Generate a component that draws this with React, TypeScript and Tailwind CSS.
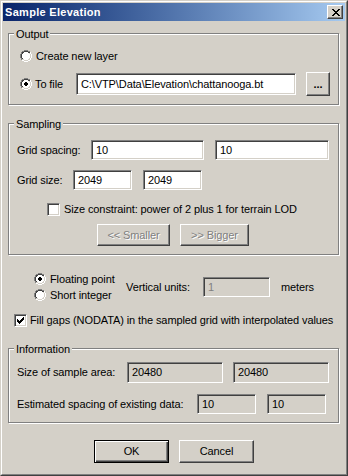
import React from "react";

// classic win2k palette
const PAL: Record<string, string> = {
  g: "#808080",
  k: "#404040",
  w: "#ffffff",
  l: "#d4d0c8",
  f: "#ffffff",
  d: "#000000",
};

const RADIO_OFF = [
  "....gggg....",
  "..ggkkkkgg..",
  ".gkkffffkkw.",
  ".gkfffffflw.",
  "gkfffffffflw",
  "gkfffffffflw",
  "gkfffffffflw",
  "gkfffffffflw",
  ".gkfffffflw.",
  ".gllffffllw.",
  "..wwllllww..",
  "....wwww....",
];

const RADIO_ON = [
  "....gggg....",
  "..ggkkkkgg..",
  ".gkkffffkkw.",
  ".gkfffffflw.",
  "gkfffddffflw",
  "gkffddddfflw",
  "gkffddddfflw",
  "gkfffddffflw",
  ".gkfffffflw.",
  ".gllffffllw.",
  "..wwllllww..",
  "....wwww....",
];

const CHECK = [
  "......d",
  ".....dd",
  "d...ddd",
  "dd.ddd.",
  "ddddd..",
  ".ddd...",
  "..d....",
];

const XMARK = [
  "dd....dd",
  ".dd..dd.",
  "..dddd..",
  "...dd...",
  "..dddd..",
  ".dd..dd.",
  "dd....dd",
];

function Pix({ rows, className }: { rows: string[]; className?: string }) {
  return (
    <svg
      width={rows[0].length}
      height={rows.length}
      shapeRendering="crispEdges"
      className={className}
    >
      {rows.flatMap((r, y) =>
        [...r].map((c, x) =>
          c === "." ? null : (
            <rect key={`${x}-${y}`} x={x} y={y} width={1} height={1} fill={PAL[c]} />
          )
        )
      )}
    </svg>
  );
}

function Radio({ checked, label }: { checked?: boolean; label: string }) {
  return (
    <div className="flex items-center h-[16px] gap-[4px]">
      <Pix rows={checked ? RADIO_ON : RADIO_OFF} className="shrink-0" />
      <span className="whitespace-nowrap">{label}</span>
    </div>
  );
}

function CheckBox({ checked }: { checked?: boolean }) {
  return (
    <div className="w-[13px] h-[13px] shrink-0 bg-white border border-t-[#808080] border-l-[#808080] border-b-white border-r-white shadow-[inset_1px_1px_0_#404040,inset_-1px_-1px_0_#d4d0c8] flex items-center justify-center">
      {checked && <Pix rows={CHECK} />}
    </div>
  );
}

function Field({
  className,
  value,
  disabled,
  readOnly,
}: {
  className: string;
  value: string;
  disabled?: boolean;
  readOnly?: boolean;
}) {
  const bg = disabled || readOnly ? "bg-[#d4d0c8]" : "bg-white";
  const color = disabled ? "text-[#808080]" : "text-black";
  return (
    <div
      className={`${className} ${bg} ${color} shrink-0 flex items-center pl-[4px] whitespace-nowrap border border-t-[#808080] border-l-[#808080] border-b-white border-r-white shadow-[inset_1px_1px_0_#404040,inset_-1px_-1px_0_#d4d0c8]`}
    >
      {value}
    </div>
  );
}

function Button({
  className,
  children,
  disabled,
  isDefault,
}: {
  className: string;
  children: React.ReactNode;
  disabled?: boolean;
  isDefault?: boolean;
}) {
  if (isDefault) {
    return (
      <div
        className={`${className} shrink-0 flex items-center justify-center border border-black shadow-[inset_1px_1px_0_#fff,inset_-1px_-1px_0_#404040,inset_-2px_-2px_0_#808080]`}
      >
        {children}
      </div>
    );
  }
  return (
    <div
      className={`${className} shrink-0 flex items-center justify-center border border-t-white border-l-white border-b-[#404040] border-r-[#404040] shadow-[inset_-1px_-1px_0_#808080] ${
        disabled ? "text-[#808080] [text-shadow:1px_1px_0_#fff]" : "text-black"
      }`}
    >
      {children}
    </div>
  );
}

function Group({
  title,
  className,
  children,
}: {
  title: string;
  className: string;
  children: React.ReactNode;
}) {
  return (
    <div
      className={`${className} relative ml-[5px] w-[331px] border border-[#808080] shadow-[inset_1px_1px_0_#fff,1px_1px_0_#fff]`}
    >
      <span className="absolute top-[-6px] left-[5px] px-[2px] bg-[#d4d0c8] whitespace-nowrap">
        {title}
      </span>
      {children}
    </div>
  );
}

export default function App() {
  return (
    <div className="w-[348px] h-[476px] bg-[#d4d0c8] font-['Liberation_Sans',Arial,sans-serif] text-[11px] leading-[13px] tracking-[-0.1px] text-black border border-t-[#d4d0c8] border-l-[#d4d0c8] border-b-[#404040] border-r-[#404040]">
      <div className="h-full border border-t-white border-l-white border-b-[#808080] border-r-[#808080] p-[1px] flex flex-col">
        {/* Title bar */}
        <div className="h-[18px] shrink-0 flex items-center justify-between pl-[2px] pr-[2px] bg-gradient-to-r from-[#0a246a] to-[#a6caf0]">
          <span className="text-white font-bold tracking-[0.3px] whitespace-nowrap">
            Sample Elevation
          </span>
          <div className="w-[16px] h-[14px] flex items-center justify-center pl-[1px] bg-[#d4d0c8] border border-t-white border-l-white border-b-[#404040] border-r-[#404040] shadow-[inset_-1px_-1px_0_#808080]">
            <Pix rows={XMARK} />
          </div>
        </div>

        {/* Output */}
        <Group title="Output" className="mt-[12px] h-[72px] pt-[14px] pl-[11px]">
          <Radio label="Create new layer" />
          <div className="mt-[8px] flex items-center h-[24px]">
            <Pix rows={RADIO_ON} className="shrink-0" />
            <span className="ml-[3px] w-[41px] whitespace-nowrap">To file</span>
            <Field className="w-[220px] h-[22px]" value="C:\VTP\Data\Elevation\chattanooga.bt" />
            <Button className="ml-[10px] w-[24px] h-[24px] font-bold">...</Button>
          </div>
        </Group>

        {/* Sampling */}
        <Group title="Sampling" className="mt-[18px] h-[132px] pt-[16px] pl-[8px]">
          <div className="flex items-center h-[20px]">
            <span className="w-[74px] whitespace-nowrap">Grid spacing:</span>
            <Field className="w-[113px] h-[20px]" value="10" />
            <Field className="ml-[11px] w-[114px] h-[20px]" value="10" />
          </div>
          <div className="mt-[10px] flex items-center h-[20px]">
            <span className="w-[56px] whitespace-nowrap">Grid size:</span>
            <Field className="w-[59px] h-[20px]" value="2049" />
            <Field className="ml-[11px] w-[59px] h-[20px]" value="2049" />
          </div>
          <div className="mt-[13px] flex items-center h-[13px] ml-[30px] gap-[4px]">
            <CheckBox />
            <span className="whitespace-nowrap">
              Size constraint: power of 2 plus 1 for terrain LOD
            </span>
          </div>
          <div className="mt-[8px] flex items-center h-[22px] ml-[80px]">
            <Button disabled className="w-[73px] h-[22px]">
              &lt;&lt; Smaller
            </Button>
            <Button disabled className="ml-[10px] w-[69px] h-[22px]">
              &gt;&gt; Bigger
            </Button>
          </div>
        </Group>

        {/* Data type and units */}
        <div className="mt-[16px] flex items-center pl-[31px]">
          <div className="w-[92px] flex flex-col">
            <Radio checked label="Floating point" />
            <Radio label="Short integer" />
          </div>
          <span className="w-[77px] whitespace-nowrap">Vertical units:</span>
          <Field disabled className="w-[67px] h-[20px]" value="1" />
          <span className="ml-[11px] whitespace-nowrap">meters</span>
        </div>

        <div className="mt-[11px] flex items-center h-[13px] pl-[11px] gap-[3px]">
          <CheckBox checked />
          <span className="whitespace-nowrap">
            Fill gaps (NODATA) in the sampled grid with interpolated values
          </span>
        </div>

        {/* Information */}
        <Group title="Information" className="mt-[21px] h-[75px] pt-[13px] pl-[8px]">
          <div className="flex items-center h-[21px]">
            <span className="w-[110px] whitespace-nowrap">Size of sample area:</span>
            <Field readOnly className="w-[96px] h-[21px]" value="20480" />
            <Field readOnly className="ml-[10px] w-[96px] h-[21px]" value="20480" />
          </div>
          <div className="mt-[11px] flex items-center h-[20px]">
            <span className="w-[180px] whitespace-nowrap">
              Estimated spacing of existing data:
            </span>
            <Field readOnly className="w-[59px] h-[20px]" value="10" />
            <Field readOnly className="ml-[11px] w-[59px] h-[20px]" value="10" />
          </div>
        </Group>

        {/* Dialog buttons */}
        <div className="mt-[17px] flex justify-center gap-[10px]">
          <Button isDefault className="w-[75px] h-[23px]">
            OK
          </Button>
          <Button className="w-[75px] h-[23px]">Cancel</Button>
        </div>
      </div>
    </div>
  );
}
